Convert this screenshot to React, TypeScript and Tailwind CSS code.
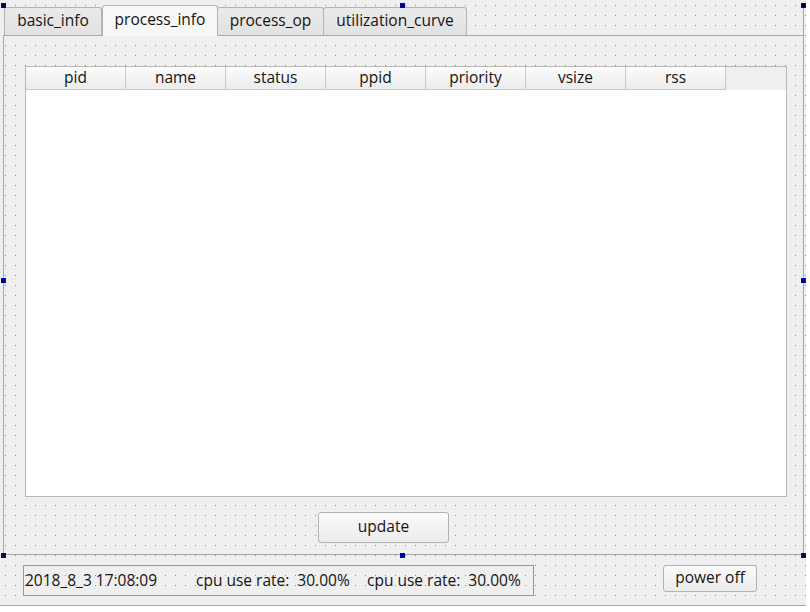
import React from 'react'

const font = { fontFamily: '"Open Sans", "Noto Sans", sans-serif' }

const TABS = [
  { name: 'basic_info', w: 'w-[98px]' },
  { name: 'process_info', w: 'w-[116px]', active: true },
  { name: 'process_op', w: 'w-[107px]' },
  { name: 'utilization_curve', w: 'w-[144px]' },
]

const COLUMNS = ['pid', 'name', 'status', 'ppid', 'priority', 'vsize', 'rss']

const HANDLES = [
  'left-[1px] top-[3px]',
  'left-[400px] top-[3px]',
  'left-[801px] top-[3px]',
  'left-[1px] top-[278px]',
  'left-[801px] top-[278px]',
  'left-[1px] top-[553px]',
  'left-[400px] top-[553px]',
  'left-[801px] top-[553px]',
]

export default function App() {
  return (
    <div
      style={font}
      className="relative h-[612px] w-[810px] overflow-hidden bg-white text-[15.5px] leading-none text-[#141414]"
    >
      <div className="h-[606px] w-[806px] border-b border-[#a8a8a8] bg-[#efefef] bg-[radial-gradient(circle_at_5.5px_5.5px,#8e8e8e_0.45px,transparent_0.75px)] bg-[size:10px_10px]">
        {/* tab widget */}
        <div className="pl-[3px] pt-[5px]">
          <div className="flex h-[30px] w-[801px] items-end border-r border-[#a8a8a8] pl-px">
            {TABS.map((t) =>
              t.active ? (
                <div
                  key={t.name}
                  className={`${t.w} relative z-10 -mb-px flex h-[31px] items-center justify-center rounded-t-[3px] border border-b-0 border-[#b4b4b4] bg-[#f7f7f7] pb-[2px]`}
                >
                  {t.name}
                </div>
              ) : (
                <div
                  key={t.name}
                  className={`${t.w} -ml-px flex h-[28px] items-center justify-center rounded-t-[3px] border border-b-0 border-[#b4b4b4] bg-[linear-gradient(#eaeaea,#e2e2e2)] pb-[1px] first:ml-0`}
                >
                  {t.name}
                </div>
              ),
            )}
          </div>
          <div className="h-[520px] w-[801px] border border-[#a8a8a8] pl-[21px] pt-[30px]">
            <div className="h-[431px] w-[762px] border border-[#b8b8b8] bg-white">
              <div className="flex h-[23px] bg-[#efefef]">
                {COLUMNS.map((c) => (
                  <div
                    key={c}
                    className="flex h-[23px] w-[100px] items-center justify-center border-r border-b border-[#c9c9c9] bg-[linear-gradient(#fbfbfb,#ececec)]"
                  >
                    {c}
                  </div>
                ))}
              </div>
            </div>
            <div className="ml-[293px] mt-[15px] flex h-[31px] w-[131px] items-center justify-center rounded-[3px] border border-[#b2b2b2] bg-[linear-gradient(#fafafa,#ececec)] pb-[1px]">
              update
            </div>
          </div>
        </div>

        {/* bottom bar */}
        <div className="flex items-start pl-[23px] pt-[10px]">
          <div className="flex h-[31px] w-[511px] items-center border border-[#e07a7a] pl-[1px]">
            <span className="w-[171px]">2018_8_3 17:08:09</span>
            <span className="w-[171px] whitespace-pre">cpu use rate:  30.00%</span>
            <span className="whitespace-pre">cpu use rate:  30.00%</span>
          </div>
          <div className="ml-[129px] flex h-[27px] w-[94px] items-center justify-center rounded-[3px] border border-[#b2b2b2] bg-[linear-gradient(#fafafa,#ececec)] pb-[1px]">
            power off
          </div>
        </div>
      </div>

      {/* designer selection handles */}
      {HANDLES.map((h) => (
        <div key={h} className={`absolute h-[5px] w-[5px] border border-[#0000c8] bg-[#000050] ${h}`} />
      ))}
    </div>
  )
}
